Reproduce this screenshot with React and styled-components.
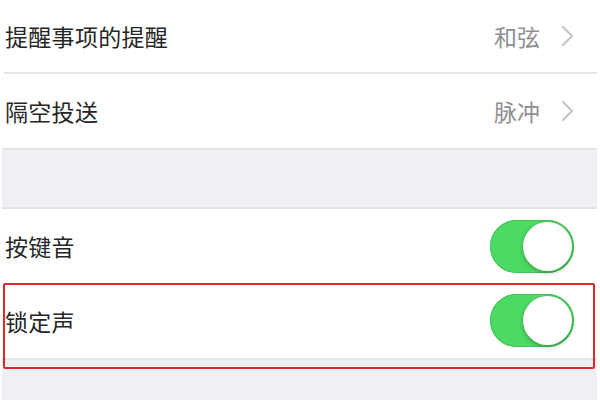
import React from "react";
import styled, { createGlobalStyle } from "styled-components";

const Global = createGlobalStyle`
  html, body { margin: 0; padding: 0; background: #ffffff; }
  body { font-family: "Noto Sans CJK SC", "Noto Sans", sans-serif; }
`;

const Page = styled.div`
  position: relative;
  width: 600px;
  height: 400px;
  overflow: hidden;
  background: #ffffff;
  display: flex;
  flex-direction: column;
  padding: 0 3px 0 2px;
  box-sizing: border-box;
`;

const Row = styled.div`
  height: ${(p) => p.$h}px;
  display: flex;
  align-items: center;
  justify-content: space-between;
  padding: ${(p) => p.$pt || 0}px 23px 0 3px;
  box-sizing: border-box;
  background: #ffffff;
  border-bottom: ${(p) => (p.$line ? "2px solid #e4e4e7" : "none")};
`;

const Separator = styled.div`
  height: 2px;
  margin-left: 2px;
  background: #e6e6e8;
`;

const Label = styled.span`
  font-size: 23px;
  color: #262626;
  letter-spacing: 0.3px;
`;

const Detail = styled.div`
  display: flex;
  align-items: center;
  gap: 21px;
  color: #8e8e93;
  font-size: 23px;
`;

const Gap = styled.div`
  height: ${(p) => p.$h}px;
  background: #efeff4;
  border-top: ${(p) => (p.$top ? "2px solid #e2e2e6" : "none")};
  border-bottom: ${(p) => (p.$bottom ? "2px solid #e2e2e6" : "none")};
  box-sizing: border-box;
  flex: ${(p) => (p.$grow ? 1 : "none")};
`;

const Track = styled.div`
  width: 84px;
  height: 53px;
  border-radius: 27px;
  background: #4cd964;
  box-shadow: inset 0 0 0 1px #44c25a;
  position: relative;
  flex: none;
`;

const Knob = styled.div`
  position: absolute;
  top: 2px;
  right: 2px;
  width: 49px;
  height: 49px;
  border-radius: 50%;
  background: #ffffff;
  box-shadow: 0 2px 4px rgba(0, 0, 0, 0.25), 0 0 0 0.5px rgba(0, 0, 0, 0.08);
`;

const Highlight = styled.div`
  position: absolute;
  left: 3px;
  top: 283px;
  width: 592px;
  height: 86px;
  border: 2px solid #e3262b;
  border-radius: 2px;
  box-sizing: border-box;
  pointer-events: none;
`;

const Chevron = () => (
  <svg width="13" height="22" viewBox="0 0 13 22" fill="none">
    <path d="M2 2 L11 11 L2 20" stroke="#c4c4c8" strokeWidth="2" strokeLinecap="round" strokeLinejoin="round" />
  </svg>
);

const Toggle = () => (
  <Track>
    <Knob />
  </Track>
);

export default function App() {
  return (
    <>
      <Global />
      <Page>
        <Row $h={72}>
          <Label>提醒事项的提醒</Label>
          <Detail>
            <span>和弦</span>
            <Chevron />
          </Detail>
        </Row>
        <Separator />
        <Row $h={74}>
          <Label>隔空投送</Label>
          <Detail>
            <span>脉冲</span>
            <Chevron />
          </Detail>
        </Row>
        <Gap $h={61} $top $bottom />
        <Row $h={74}>
          <Label>按键音</Label>
          <Toggle />
        </Row>
        <Row $h={77} $line>
          <Label>锁定声</Label>
          <Toggle />
        </Row>
        <Gap $grow />
        <Highlight />
      </Page>
    </>
  );
}
